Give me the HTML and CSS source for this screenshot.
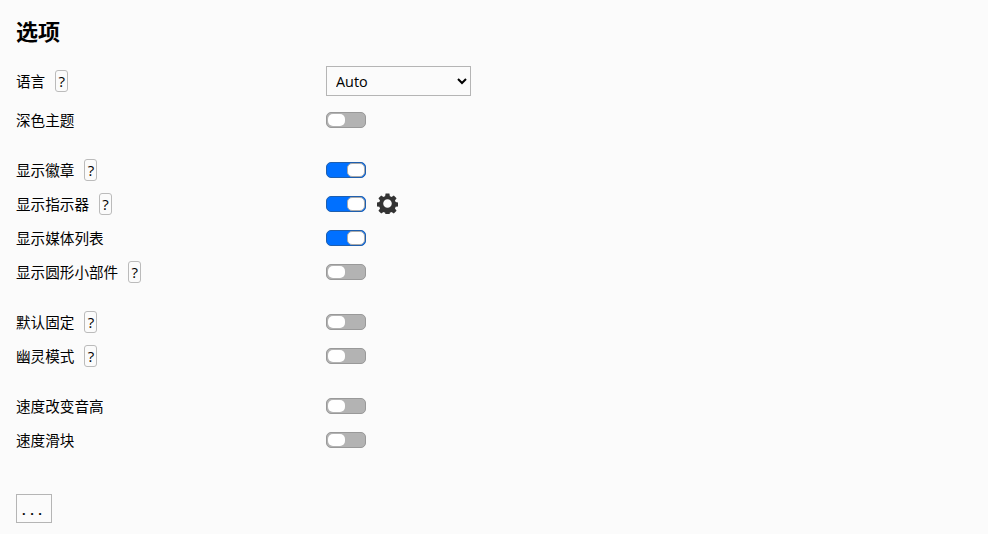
FILE: index.html
```html
<!DOCTYPE html>
<html lang="zh-CN">
<head>
<meta charset="utf-8">
<title>选项</title>
<link rel="stylesheet" href="styles.css">
</head>
<body>
<h1 class="title">选项</h1>
<div class="group first">
  <div class="row row-lang">
    <div class="label"><span class="text">语言</span><span class="help">?</span></div>
    <select class="select"><option>Auto</option></select>
  </div>
  <div class="row">
    <div class="label"><span class="text">深色主题</span></div>
    <span class="toggle"></span>
  </div>
</div>
<div class="group">
  <div class="row">
    <div class="label"><span class="text">显示徽章</span><span class="help">?</span></div>
    <span class="toggle on"></span>
  </div>
  <div class="row">
    <div class="label"><span class="text">显示指示器</span><span class="help">?</span></div>
    <span class="toggle on"></span>
    <svg class="gear" viewBox="1 1 22 22" aria-hidden="true"><path fill-rule="evenodd" d="M10 1.500h4l.5 2.900c.6.2 1.200.5 1.700.8l2.400-1.700 2.900 2.900-1.700 2.400c.3.5.6 1.100.7 1.700l3 .5v4l-3 .5c-.1.6-.4 1.200-.7 1.700l1.700 2.400-2.900 2.900-2.400-1.700c-.5.3-1.100.6-1.700.7l-.5 3h-4l-.5-3c-.6-.1-1.200-.4-1.700-.7l-2.400 1.700-2.900-2.900 1.700-2.400c-.3-.5-.6-1.100-.7-1.700l-3-.5v-4l3-.5c.1-.6.4-1.200.7-1.700L2.500 6.400l2.900-2.900 2.400 1.700c.5-.3 1.100-.6 1.700-.8zM12 7.500a4.500 4.500 0 1 0 0 9 4.500 4.500 0 0 0 0-9z"/></svg>
  </div>
  <div class="row">
    <div class="label"><span class="text">显示媒体列表</span></div>
    <span class="toggle on"></span>
  </div>
  <div class="row">
    <div class="label"><span class="text">显示圆形小部件</span><span class="help">?</span></div>
    <span class="toggle"></span>
  </div>
</div>
<div class="group">
  <div class="row">
    <div class="label"><span class="text">默认固定</span><span class="help">?</span></div>
    <span class="toggle"></span>
  </div>
  <div class="row">
    <div class="label"><span class="text">幽灵模式</span><span class="help">?</span></div>
    <span class="toggle"></span>
  </div>
</div>
<div class="group">
  <div class="row">
    <div class="label"><span class="text">速度改变音高</span></div>
    <span class="toggle"></span>
  </div>
  <div class="row">
    <div class="label"><span class="text">速度滑块</span></div>
    <span class="toggle"></span>
  </div>
</div>
<button class="more">...</button>
</body>
</html>
```
FILE: styles.css
```css
html, body {
  margin: 0;
  height: 534px;
  overflow: hidden;
  background: #fbfbfb;
}
body {
  padding: 0 0 0 16px;
  color: #000;
  font-family: "Open Sans", "Noto Sans CJK SC", sans-serif;
  font-size: 14.6px;
}
.title {
  margin: 0;
  height: 64px;
  padding-bottom: 4px;
  box-sizing: border-box;
  line-height: 60px;
  font-size: 22px;
  font-weight: 700;
  font-family: "Noto Sans CJK SC", sans-serif;
}
.group {
  margin-top: 16px;
}
.group.first {
  margin-top: 0;
}
.row {
  display: flex;
  align-items: center;
  height: 34px;
}
.row-lang {
  margin-bottom: 5px;
}
.label {
  display: flex;
  align-items: center;
  width: 310px;
  font-family: "Noto Sans CJK SC", sans-serif;
}
.text {
  margin-bottom: 2px;
}
.help {
  box-sizing: border-box;
  width: 13px;
  height: 22px;
  margin-left: 10px;
  border: 1px solid #bbb;
  border-radius: 3px;
  line-height: 20px;
  text-align: center;
  font-family: "Open Sans", sans-serif;
  font-size: 15px;
}
.select {
  box-sizing: border-box;
  width: 145px;
  height: 30px;
  padding: 0 4px 0 5px;
  border: 1px solid #b5b5b5;
  border-radius: 0;
  background: #fbfbfb;
  color: #000;
  font-family: "Open Sans", sans-serif;
  font-size: 14.4px;
}
.toggle {
  box-sizing: border-box;
  display: block;
  position: relative;
  width: 40px;
  height: 16px;
  border: 1px solid #999;
  border-radius: 5px;
  background: #b3b3b3;
}
.toggle::after {
  content: "";
  position: absolute;
  top: 1px;
  left: 1px;
  width: 17px;
  height: 12px;
  border-radius: 5px;
  background: #fff;
}
.toggle.on {
  border-color: #1f5fae;
  background: #0070ff;
}
.toggle.on::after {
  box-sizing: border-box;
  top: 0;
  left: auto;
  right: 0;
  width: 18px;
  height: 14px;
  border: 1px solid #aaa;
}
.gear {
  display: block;
  width: 21px;
  height: 21px;
  margin-left: 11px;
  margin-bottom: 1px;
  fill: #333;
}
.more {
  display: block;
  box-sizing: border-box;
  width: 36px;
  height: 29px;
  margin-top: 37px;
  padding: 0;
  border: 1px solid #b5b5b5;
  background: #fbfbfb;
  color: #000;
  font-family: "Open Sans", sans-serif;
  font-size: 15px;
  font-weight: 600;
  letter-spacing: 4px;
}
```
